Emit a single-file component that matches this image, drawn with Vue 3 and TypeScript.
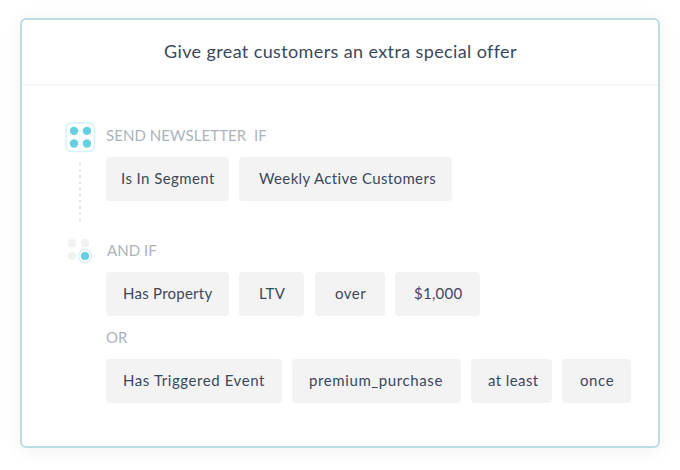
<script setup lang="ts">
interface Chip {
  text: string
  width: number
  inset: number
  tracking: number
}

const segment: Chip[] = [
  { text: 'Is In Segment', width: 123, inset: 15, tracking: 0.42 },
  { text: 'Weekly Active Customers', width: 213, inset: 20, tracking: 0.37 },
]
const property: Chip[] = [
  { text: 'Has Property', width: 123, inset: 17, tracking: 0.25 },
  { text: 'LTV', width: 65, inset: 20, tracking: 0.3 },
  { text: 'over', width: 70, inset: 20, tracking: 0.5 },
  { text: '$1,000', width: 85, inset: 19, tracking: 0.25 },
]
const event: Chip[] = [
  { text: 'Has Triggered Event', width: 176, inset: 17, tracking: 0.58 },
  { text: 'premium_purchase', width: 169, inset: 17, tracking: 0.6 },
  { text: 'at least', width: 81, inset: 17, tracking: 0.4 },
  { text: 'once', width: 69, inset: 18, tracking: 0.6 },
]

function chipStyle(chip: Chip) {
  return {
    width: `${chip.width}px`,
    paddingLeft: `${chip.inset}px`,
    letterSpacing: `${chip.tracking}px`,
  }
}
</script>

<template>
  <main class="page">
    <article class="card">
      <header class="head"><h1 class="title">Give great customers an extra special offer</h1></header>
      <div class="body">
        <svg class="rail" width="32" height="144" viewBox="0 0 32 144" aria-hidden="true">
          <rect x="1" y="1" width="28.5" height="28.5" rx="5" fill="#fff" stroke="#d3f2f6" stroke-width="1.5" />
          <g fill="#65d0e1">
            <circle cx="9" cy="8.9" r="4.2" />
            <circle cx="21.9" cy="8.9" r="4.2" />
            <circle cx="9" cy="21.5" r="4.2" />
            <circle cx="21.9" cy="21.5" r="4.2" />
          </g>
          <line x1="15" y1="40.5" x2="15" y2="101" stroke="#e6e6e9" stroke-width="2" stroke-dasharray="2.8 3.45" />
          <g fill="#f1f1f2">
            <circle cx="7.1" cy="121.2" r="4.1" />
            <circle cx="20" cy="121.2" r="4.1" />
            <circle cx="7.1" cy="134" r="4.1" />
          </g>
          <circle cx="20" cy="134" r="6.4" fill="#fff" stroke="#cdf0f5" stroke-width="1.2" />
          <circle cx="20" cy="134" r="4.1" fill="#5fcfe0" />
        </svg>
        <div class="rules">
          <p class="label send">SEND NEWSLETTER&nbsp; IF</p>
          <div class="row">
            <span v-for="c in segment" :key="c.text" class="chip" :style="chipStyle(c)">{{ c.text }}</span>
          </div>
          <p class="label and">AND IF</p>
          <div class="row property">
            <span v-for="c in property" :key="c.text" class="chip" :style="chipStyle(c)">{{ c.text }}</span>
          </div>
          <p class="label or">OR</p>
          <div class="row">
            <span v-for="c in event" :key="c.text" class="chip" :style="chipStyle(c)">{{ c.text }}</span>
          </div>
        </div>
      </div>
    </article>
  </main>
</template>

<style>
body {
  background: #fff;
}
</style>

<style scoped>
.page {
  box-sizing: border-box;
  width: 680px;
  height: 470px;
  padding: 18px 20px 22px;
  overflow: hidden;
  font-family: Lato, "Open Sans", sans-serif;
  color: #3b485b;
}
.card {
  box-sizing: border-box;
  height: 430px;
  border: 2px solid #bcdde1;
  border-radius: 6px;
  background: #fff;
  box-shadow: 0 2px 20px rgba(0, 0, 0, 0.06);
}
.head {
  box-sizing: border-box;
  height: 66px;
  padding-top: 19px;
  border-bottom: 2px solid #f6f6f6;
}
.title {
  margin: 0 0 0 142px;
  font-size: 18px;
  line-height: 24px;
  font-weight: 400;
  letter-spacing: 0.38px;
  white-space: nowrap;
}
.body {
  display: flex;
  gap: 9px;
  padding: 36px 0 0 43px;
}
.rail {
  flex: none;
}
.rules {
  flex: 1;
}
.label {
  margin: 0;
  font-size: 15px;
  line-height: 20px;
  letter-spacing: 0.06px;
  color: #adb3bb;
  white-space: pre;
}
.send {
  padding: 3px 0 12px;
}
.and {
  padding: 39px 0 12px 1px;
}
.or {
  padding: 11px 0 12px;
}
.row {
  display: flex;
  gap: 10px;
}
.property .chip:nth-child(3) {
  margin-left: 1px;
}
.chip {
  box-sizing: border-box;
  flex: none;
  height: 44px;
  border-radius: 4px;
  background: #f3f3f3;
  font-size: 15px;
  line-height: 42px;
  white-space: nowrap;
}
</style>
